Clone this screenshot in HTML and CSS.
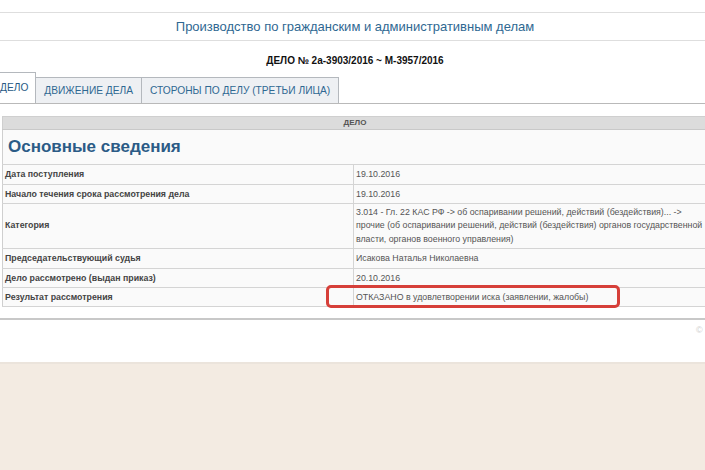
FILE: index.html
```html
<!DOCTYPE html>
<html lang="ru">
<head>
  <meta charset="UTF-8" />
  <title>Дело 2а-3903/2016</title>
  <link rel="stylesheet" href="styles.css">
</head>
<body>
  <div class="page">
    <div class="site-head">Производство по гражданским и административным делам</div>
    <div class="case-no">ДЕЛО № 2а-3903/2016 ~ М-3957/2016</div>

    <ul class="tabs">
      <li class="tab active">ДЕЛО</li>
      <li class="tab">ДВИЖЕНИЕ ДЕЛА</li>
      <li class="tab">СТОРОНЫ ПО ДЕЛУ (ТРЕТЬИ ЛИЦА)</li>
    </ul>

    <div class="tab-panel">
      <table class="case-table">
        <colgroup><col class="col-label"><col></colgroup>
        <tr class="band-row"><th colspan="2" class="band">ДЕЛО</th></tr>
        <tr class="section-row"><td colspan="2" class="section"><h2>Основные сведения</h2></td></tr>
        <tr><td class="label">Дата поступления</td><td>19.10.2016</td></tr>
        <tr><td class="label">Начало течения срока рассмотрения дела</td><td>19.10.2016</td></tr>
        <tr class="tall">
          <td class="label">Категория</td>
          <td>3.014 - Гл. 22 КАС РФ -&gt; об оспаривании решений, действий (бездействия)... -&gt;<br>прочие (об оспаривании решений, действий (бездействия) органов государственной<br>власти, органов военного управления)</td>
        </tr>
        <tr><td class="label">Председательствующий судья</td><td>Исакова Наталья Николаевна</td></tr>
        <tr><td class="label">Дело рассмотрено (выдан приказ)</td><td>20.10.2016</td></tr>
        <tr class="last"><td class="label">Результат рассмотрения</td><td>ОТКАЗАНО в удовлетворении иска (заявлении, жалобы)</td></tr>
      </table>
      <!-- red marker drawn over the result row -->
      <div class="highlight"></div>
    </div>

    <div class="copy">©</div>
  </div>
  <div class="footer"></div>
</body>
</html>
```

FILE: styles.css
```css
:root {
  --blue: #2f6892;
  --head-blue: #2b5b86;
  --tab-bg: #eef0f3;
  --tab-border: #b4b8bd;
  --line: #d4d4d4;
  --label: #444;
  --value: #555;
}

html, body { margin: 0; overflow-x: hidden; }
body {
  font-family: "Liberation Sans", Arial, sans-serif;
  background: #f3ebe2;
  width: 705px;
}

.page {
  margin-left: -10px;
  width: 730px;
  background: #fff;
  padding-top: 12px;
  padding-bottom: 25px;
}

.site-head {
  border-top: 1px solid #dedede;
  border-bottom: 1px solid #dedede;
  height: 27px;
  line-height: 27px;
  text-align: center;
  font-size: 13px;
  color: var(--blue);
}

.case-no {
  padding-top: 13px;
  line-height: 14px;
  margin-bottom: 4px;
  text-align: center;
  font-size: 10px;
  font-weight: bold;
  color: #111;
}

.tabs {
  list-style: none;
  margin: 0 0 -1px -2px;
  padding: 0;
  display: flex;
  align-items: flex-end;
  position: relative;
}
.tab {
  font-size: 10.2px;
  color: var(--blue);
  background: var(--tab-bg);
  border: 1px solid var(--tab-border);
  border-left: none;
  height: 25px;
  line-height: 25px;
  padding: 0 8px;
}
.tab.active {
  background: #fff;
  border-left: 1px solid var(--tab-border);
  border-bottom-color: #fff;
  height: 30px;
  line-height: 30px;
  padding: 0 7px 0 11px;
  color: #2a5a85;
}

.tab-panel {
  position: relative;
  border: 1px solid #b9b9b9;
  border-bottom: 2px solid #c8c8c8;
  padding: 12px 11px 11px 11px;
}

.case-table {
  width: 706px;
  border-collapse: collapse;
  background: #fafafa;
  border: 1px solid #cfcfcf;
  font-size: 8.8px;
  color: var(--value);
}
.col-label { width: 351px; }
.case-table tr { height: 19.7px; }
.case-table td {
  border: 1px solid var(--line);
  border-left: none;
  padding: 0 2px;
}
.case-table td.label {
  border-right: 1px solid var(--line);
  font-weight: bold;
  color: var(--label);
}
.case-table tr.tall { height: 44.5px; }
.case-table .tall td { line-height: 13.5px; }
.case-table tr.last { height: 19px; }
.case-table tr.band-row { height: 13px; }
.case-table tr.section-row { height: 35px; }

.band {
  background: #dcdcdc;
  border-bottom: 1px solid #c9c9c9;
  padding: 0;
  font-size: 8px;
  color: #555;
  line-height: 12px;
}
.case-table td.section {
  padding: 0 0 0 5px;
  border-top: none;
}
.section h2 {
  margin: 0;
  font-size: 17px;
  color: var(--head-blue);
}

.highlight {
  position: absolute;
  left: 335px;
  top: 181px;
  width: 288px;
  height: 17px;
  border: 3px solid #d63f39;
  border-radius: 5px;
}

.copy {
  margin: 3px 0 0 706px;
  font-size: 9px;
  color: #cfcfcf;
  line-height: 14px;
  height: 14px;
}

.footer {
  border-top: 2px solid #ebe4dc;
  height: 120px;
}
```
